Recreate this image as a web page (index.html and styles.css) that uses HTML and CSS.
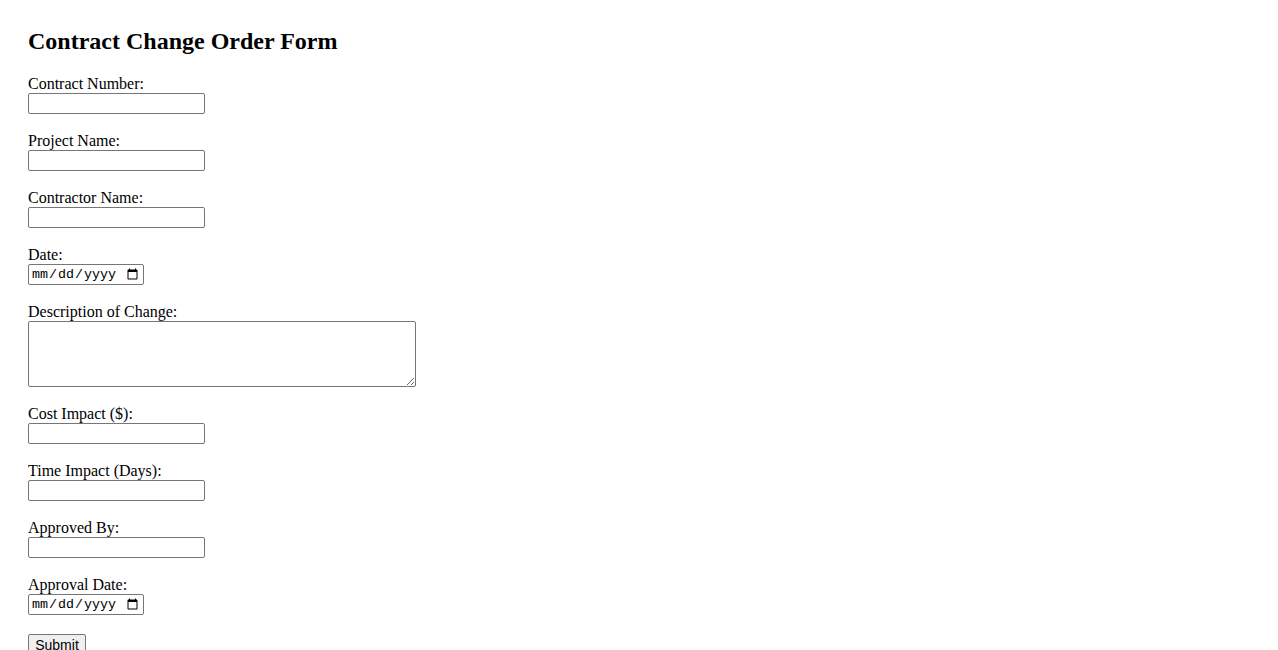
FILE: index.html
```html
<!DOCTYPE html>
<html lang="en">
<head>
<meta charset="utf-8">
<title>Contract Change Order Form</title>
<link rel="stylesheet" href="styles.css">
</head>
<body>
<div class="page">
  <h2 class="title">Contract Change Order Form</h2>
  <form class="form">
    <div class="field">
      <label class="label" for="cn">Contract Number:</label>
      <input class="text" id="cn" type="text">
    </div>
    <div class="field">
      <label class="label" for="pn">Project Name:</label>
      <input class="text" id="pn" type="text">
    </div>
    <div class="field">
      <label class="label" for="ctn">Contractor Name:</label>
      <input class="text" id="ctn" type="text">
    </div>
    <div class="field">
      <label class="label" for="d">Date:</label>
      <input class="date" id="d" type="date">
    </div>
    <div class="field">
      <label class="label" for="desc">Description of Change:</label>
      <textarea class="area" id="desc"></textarea>
    </div>
    <div class="field">
      <label class="label" for="ci">Cost Impact ($):</label>
      <input class="text" id="ci" type="text">
    </div>
    <div class="field">
      <label class="label" for="ti">Time Impact (Days):</label>
      <input class="text" id="ti" type="text">
    </div>
    <div class="field">
      <label class="label" for="ab">Approved By:</label>
      <input class="text" id="ab" type="text">
    </div>
    <div class="field">
      <label class="label" for="ad">Approval Date:</label>
      <input class="date" id="ad" type="date">
    </div>
    <div class="actions">
      <button class="submit" type="submit">Submit</button>
    </div>
  </form>
</div>
</body>
</html>
```
FILE: styles.css
```css
html, body {
  margin: 0;
  padding: 0;
  background: #ffffff;
}
body {
  font-family: "Liberation Serif", "Times New Roman", serif;
  font-size: 16px;
  color: #000000;
}
.page {
  padding: 27px 28px 0 28px;
}
.title {
  margin: 0 0 20px 0;
  font-size: 24px;
  font-weight: bold;
  line-height: 28px;
}
.form {
  display: flex;
  flex-direction: column;
  align-items: flex-start;
}
.field {
  display: flex;
  flex-direction: column;
  align-items: flex-start;
  margin-bottom: 18px;
}
.label {
  display: block;
  line-height: 18px;
  height: 18px;
}
.text, .date, .area {
  box-sizing: border-box;
  margin: 0;
  border: 1px solid #767676;
  border-radius: 2px;
  background: #ffffff;
  padding: 1px 2px;
}
.text {
  width: 177px;
  height: 21px;
  font-family: "Liberation Sans", Arial, sans-serif;
  font-size: 13.333px;
}
.date {
  width: 116px;
  height: 21px;
  font-family: "Liberation Mono", "DejaVu Sans Mono", monospace;
  font-size: 13.333px;
  color: #000000;
}
.area {
  width: 388px;
  height: 66px;
  font-family: "Liberation Mono", monospace;
  font-size: 13.333px;
  resize: both;
}
.actions {
  padding-top: 1px;
}
.submit {
  box-sizing: border-box;
  margin: 0;
  width: 58px;
  height: 21px;
  padding: 1px 6px;
  font-family: "Liberation Sans", Arial, sans-serif;
  font-size: 14px;
  color: #000000;
  background: #efefef;
  border: 1px solid #767676;
  border-radius: 2px;
}
```
